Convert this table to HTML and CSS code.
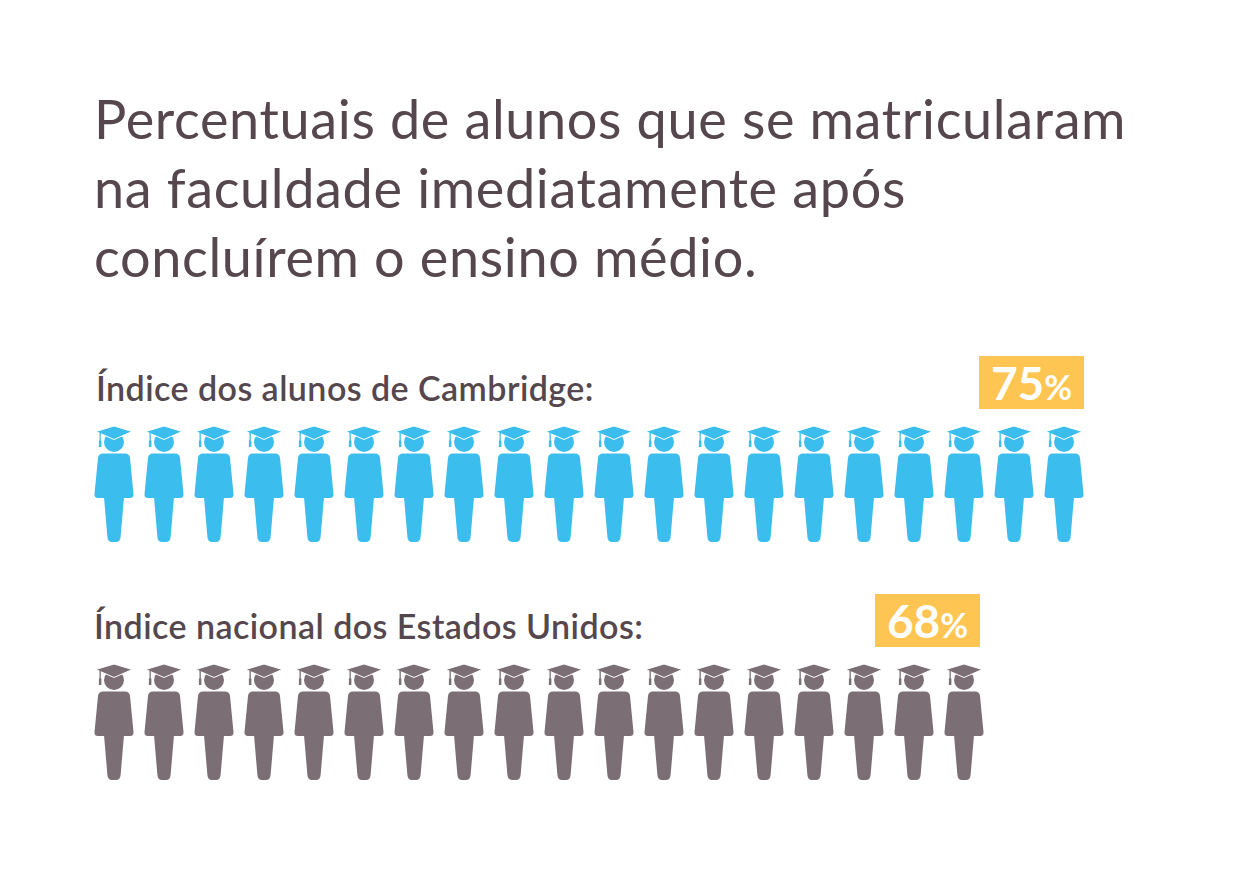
FILE: index.html
```html
<!DOCTYPE html>
<html lang="pt">
<head>
<meta charset="utf-8">
<title>Percentuais de alunos</title>
<link rel="stylesheet" href="styles.css">
</head>
<body>
<svg class="defs" width="0" height="0" aria-hidden="true">
  <symbol id="grad" viewBox="0 0 40 117">
    <circle cx="20" cy="16" r="10"/>
    <path d="M9,27.5 H31 Q35.5,27.5 36,32 L39.5,68 Q39.8,72 36,72 H4 Q0.2,72 0.5,68 L4,32 Q4.5,27.5 9,27.5 Z"/>
    <path d="M10,71 H30 L26.6,111 Q26.2,116 22,116 H18 Q13.8,116 13.4,111 Z"/>
    <path d="M20,0 L38.2,5.5 L20,13.5 L1.8,5.5 Z" stroke="#fff" stroke-width="1" stroke-linejoin="round"/>
    <rect x="5.5" y="5.5" width="1.3" height="12"/>
    <rect x="4.9" y="14.5" width="2.5" height="6.5"/>
  </symbol>
</svg>
<main class="page">
  <h1 class="title">Percentuais de alunos que se matricularam<br>na faculdade imediatamente após<br>concluírem o ensino médio.</h1>

  <section class="group group-cambridge">
    <div class="head">
      <h2 class="label">Índice dos alunos de Cambridge:</h2>
      <div class="badge">75<span class="pct">%</span></div>
    </div>
    <div class="icons blue" id="row1"></div>
  </section>

  <section class="group group-us">
    <div class="head">
      <h2 class="label">Índice nacional dos Estados Unidos:</h2>
      <div class="badge badge-us">68<span class="pct">%</span></div>
    </div>
    <div class="icons gray" id="row2"></div>
  </section>
</main>
<script>
function fill(id, n){
  var row = document.getElementById(id), html = '';
  for (var i = 0; i < n; i++) html += '<svg class="icon" viewBox="0 0 40 117"><use href="#grad"/></svg>';
  row.innerHTML = html;
}
fill('row1', 20);
fill('row2', 18);
</script>
</body>
</html>
```

FILE: styles.css
```css
html, body {
  margin: 0;
  padding: 0;
  background: #ffffff;
}
.defs {
  position: absolute;
  width: 0;
  height: 0;
  overflow: hidden;
}
.page {
  padding: 84px 0 0 94px;
  font-family: Lato, "Open Sans", sans-serif;
  color: #55474d;
}
.title {
  margin: 0;
  font-size: 54px;
  line-height: 69px;
  font-weight: 400;
  letter-spacing: 0.65px;
}
.group {
  display: flex;
  flex-direction: column;
  width: max-content;
}
.group-cambridge {
  margin-top: 65px;
}
.group-us {
  margin-top: 51px;
}
.head {
  display: flex;
  justify-content: space-between;
  align-items: flex-end;
  height: 53px;
}
.label {
  margin: 0 0 0 2px;
  font-size: 34px;
  line-height: 33px;
  font-weight: 600;
  letter-spacing: 0.45px;
  padding-bottom: 5.5px;
}
.group-us .label {
  margin-left: 0;
}
.badge {
  width: 105px;
  height: 53px;
  background: #fec552;
  color: #ffffff;
  font-weight: 700;
  font-size: 46px;
  line-height: 53px;
  text-align: center;
}
.badge-us {
  margin-right: 4px;
}
.pct {
  font-size: 34px;
}
.icons {
  display: flex;
  gap: 10px;
  margin-top: 17px;
}
.icon {
  width: 40px;
  height: 117px;
  display: block;
}
.blue {
  fill: #3bbdee;
}
.gray {
  fill: #7b6e74;
}
```
